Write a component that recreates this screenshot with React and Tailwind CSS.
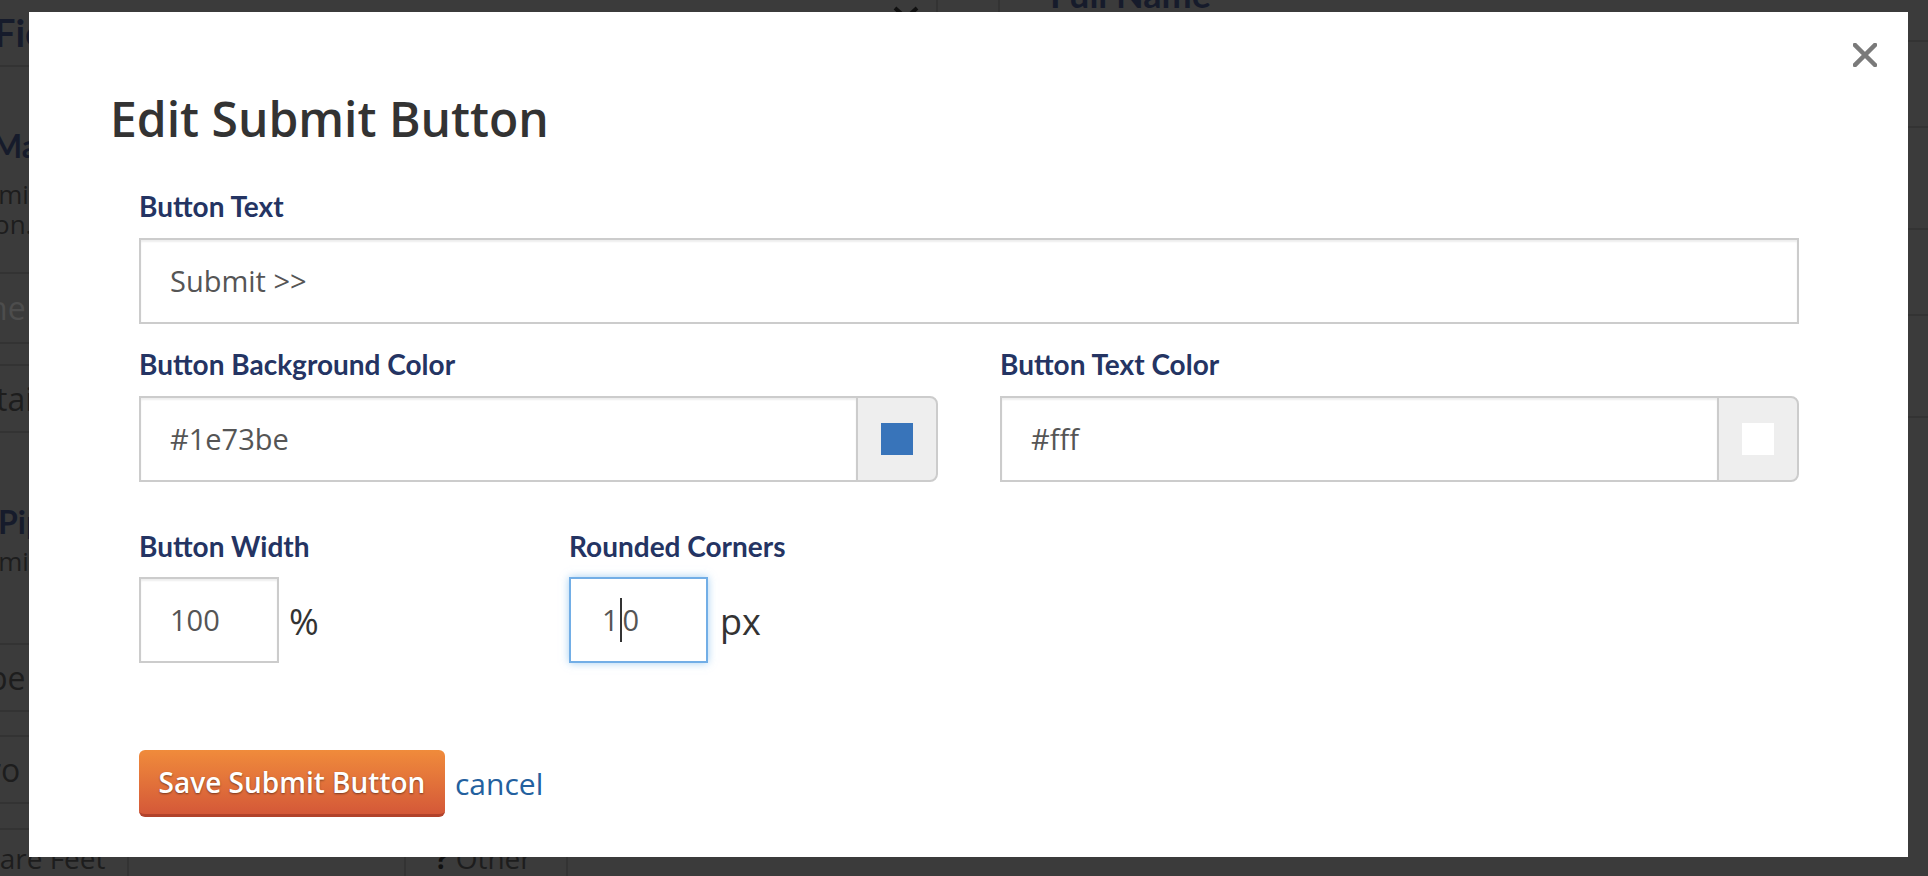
import React from "react";

const Label = ({ children }) => (
  <div className="font-['Lato',sans-serif] font-bold text-[28px] leading-[34px] text-[#243463]">
    {children}
  </div>
);

const TextField = ({ value }) => (
  <div className="h-[86px] border-2 border-[#ccc] bg-white shadow-[inset_0_2px_2px_rgba(0,0,0,0.07)] flex items-center pl-[29px] text-[29px] text-[#555]">
    {value}
  </div>
);

const ColorField = ({ value, swatch }) => (
  <div className="flex h-[86px]">
    <div className="flex-1 border-2 border-r-0 border-[#ccc] shadow-[inset_0_2px_2px_rgba(0,0,0,0.07)] flex items-center pl-[29px] text-[29px] text-[#555]">
      {value}
    </div>
    <div className="w-[82px] border-2 border-[#ccc] bg-[#eee] rounded-r-[8px] flex items-center justify-center">
      <div className={`w-[32px] h-[32px] ${swatch}`} />
    </div>
  </div>
);

export default function App() {
  return (
    <div className="relative w-[1928px] h-[876px] overflow-hidden bg-[#3b3b3b] font-['Open_Sans',sans-serif]">
      {/* dimmed page behind the modal */}
      <div className="flex h-full">
        <div className="w-[640px] flex flex-col overflow-hidden whitespace-nowrap">
          <div className="h-[67px] flex items-center border-b-2 border-[#333]">
            <span className="-ml-[6px] font-['Lato',sans-serif] font-bold text-[38px] text-[#161b2b]">Fields</span>
          </div>
          <div className="h-[207px] flex flex-col pt-[63px] border-b-2 border-[#333]">
            <span className="-ml-[8px] font-['Lato',sans-serif] font-bold text-[32px] leading-[32px] text-[#161b2b]">Map</span>
            <span className="mt-[17px] -ml-[22px] text-[26px] leading-[30px] text-[#1d1d1d]">Limits</span>
            <span className="-ml-[6px] text-[26px] leading-[30px] text-[#1d1d1d]">on.</span>
          </div>
          <div className="h-[70px] flex items-center border-b-2 border-[#333]">
            <span className="-ml-[12px] text-[32px] text-[#4d4d4d]">ne</span>
          </div>
          <div className="h-[22px] border-b-2 border-[#333]" />
          <div className="h-[67px] flex items-center border-b-2 border-[#333]">
            <span className="-ml-[4px] text-[32px] text-[#1d1d1d]">tail</span>
          </div>
          <div className="h-[212px] flex flex-col pt-[73px] border-b-2 border-[#333]">
            <span className="-ml-[2px] font-['Lato',sans-serif] font-bold text-[32px] leading-[32px] text-[#161b2b]">Pipe</span>
            <span className="mt-[8px] -ml-[22px] text-[26px] leading-[30px] text-[#1d1d1d]">Limits</span>
          </div>
          <div className="h-[67px] flex items-center border-b-2 border-[#333]">
            <span className="-ml-[12px] text-[32px] text-[#1d1d1d]">pe</span>
          </div>
          <div className="h-[25px] border-b-2 border-[#333]" />
          <div className="h-[67px] flex items-center border-b-2 border-[#333]">
            <span className="-ml-[12px] text-[32px] text-[#1d1d1d]">ro</span>
          </div>
          <div className="h-[26px] border-b-2 border-[#333]" />
          <div className="flex-1 flex">
            <div className="w-[129px] border-r-2 border-[#333] flex items-end">
              <span className="-ml-[50px] text-[28px] leading-[36px] text-[#1d1d1d]">Square Feet</span>
            </div>
            <div className="w-[277px] border-r-2 border-[#333]" />
            <div className="w-[162px] border-r-2 border-[#333] flex items-end pl-[29px]">
              <span className="text-[28px] leading-[36px] text-[#1d1d1d]">
                <span className="font-bold text-[#111]">?</span> Other
              </span>
            </div>
          </div>
        </div>

        <div className="flex-1 flex flex-col">
          <div className="h-[12px] flex">
            <div className="w-[298px] border-r-2 border-[#333] flex justify-end pr-[16px]">
              <svg width="28" height="12" viewBox="0 0 28 12" className="mt-[6px]">
                <path d="M3 2 L14 12 L25 2" fill="none" stroke="#111" strokeWidth="4" />
              </svg>
            </div>
            <div className="w-[62px] border-r-2 border-[#333]" />
            <div className="pl-[50px]">
              <span className="block -mt-[26px] font-['Lato',sans-serif] font-bold text-[36px] leading-[40px] text-[#161b2b] whitespace-nowrap">
                Full Name
              </span>
            </div>
          </div>
        </div>

        <div className="w-[20px] flex flex-col">
          <div className="h-[42px] border-b-2 border-[#333]" />
          <div className="h-[86px] border-b-2 border-[#333]" />
          <div className="h-[102px] border-b-2 border-[#333]" />
          <div className="h-[86px] border-b-2 border-[#333]" />
          <div className="h-[102px] border-b-2 border-[#333]" />
        </div>
      </div>

      {/* modal */}
      <div className="absolute left-[29px] top-[12px] w-[1879px] h-[845px] bg-white pt-[80px] px-[81px]">
        <button type="button" className="absolute left-[1824px] top-[31px] w-[24px] h-[24px]">
          <svg viewBox="0 0 24 24" width="24" height="24">
            <path d="M2 2 L22 22 M22 2 L2 22" stroke="#7a7a7a" strokeWidth="4.5" strokeLinecap="square" />
          </svg>
        </button>

        <h2 className="font-semibold text-[48px] leading-[53px] text-[#333]">Edit Submit Button</h2>

        <div className="ml-[29px] mt-[44px] w-[1660px]">
          <Label>Button Text</Label>
          <div className="mt-[15px]">
            <TextField value="Submit >>" />
          </div>

          <div className="mt-[23px] flex gap-[62px]">
            <div className="flex-1">
              <Label>Button Background Color</Label>
              <div className="mt-[15px]">
                <ColorField value="#1e73be" swatch="bg-[#3874ba]" />
              </div>
            </div>
            <div className="flex-1">
              <Label>Button Text Color</Label>
              <div className="mt-[15px]">
                <ColorField value="#fff" swatch="bg-white" />
              </div>
            </div>
          </div>

          <div className="mt-[47px] flex">
            <div className="w-[430px]">
              <Label>Button Width</Label>
              <div className="mt-[14px] flex items-center">
                <div className="w-[140px] h-[86px] border-2 border-[#ccc] shadow-[inset_0_2px_2px_rgba(0,0,0,0.07)] flex items-center pl-[29px] text-[29px] text-[#555]">
                  100
                </div>
                <span className="ml-[10px] mt-[4px] text-[36px] text-[#333]">%</span>
              </div>
            </div>
            <div>
              <Label>Rounded Corners</Label>
              <div className="mt-[14px] flex items-center">
                <div className="w-[139px] h-[86px] border-2 border-[#72aee6] shadow-[0_0_8px_rgba(102,175,233,0.6)] flex items-center pl-[31px] text-[29px] text-[#555]">
                  1
                  <span className="inline-block w-[2px] h-[44px] bg-[#333] mx-[1px]" />
                  0
                </div>
                <span className="ml-[12px] mt-[4px] text-[36px] text-[#333]">px</span>
              </div>
            </div>
          </div>

          <div className="mt-[87px] flex items-center">
            <button
              type="button"
              className="w-[306px] h-[67px] rounded-[6px] bg-linear-to-b from-[#f08b3b] to-[#d45838] border-b-[3px] border-[#b1422b] text-white font-semibold text-[28px] [text-shadow:0_1px_2px_rgba(0,0,0,0.45)]"
            >
              Save Submit Button
            </button>
            <a href="#" className="ml-[10px] text-[30px] text-[#23609e]">
              cancel
            </a>
          </div>
        </div>
      </div>
    </div>
  );
}
